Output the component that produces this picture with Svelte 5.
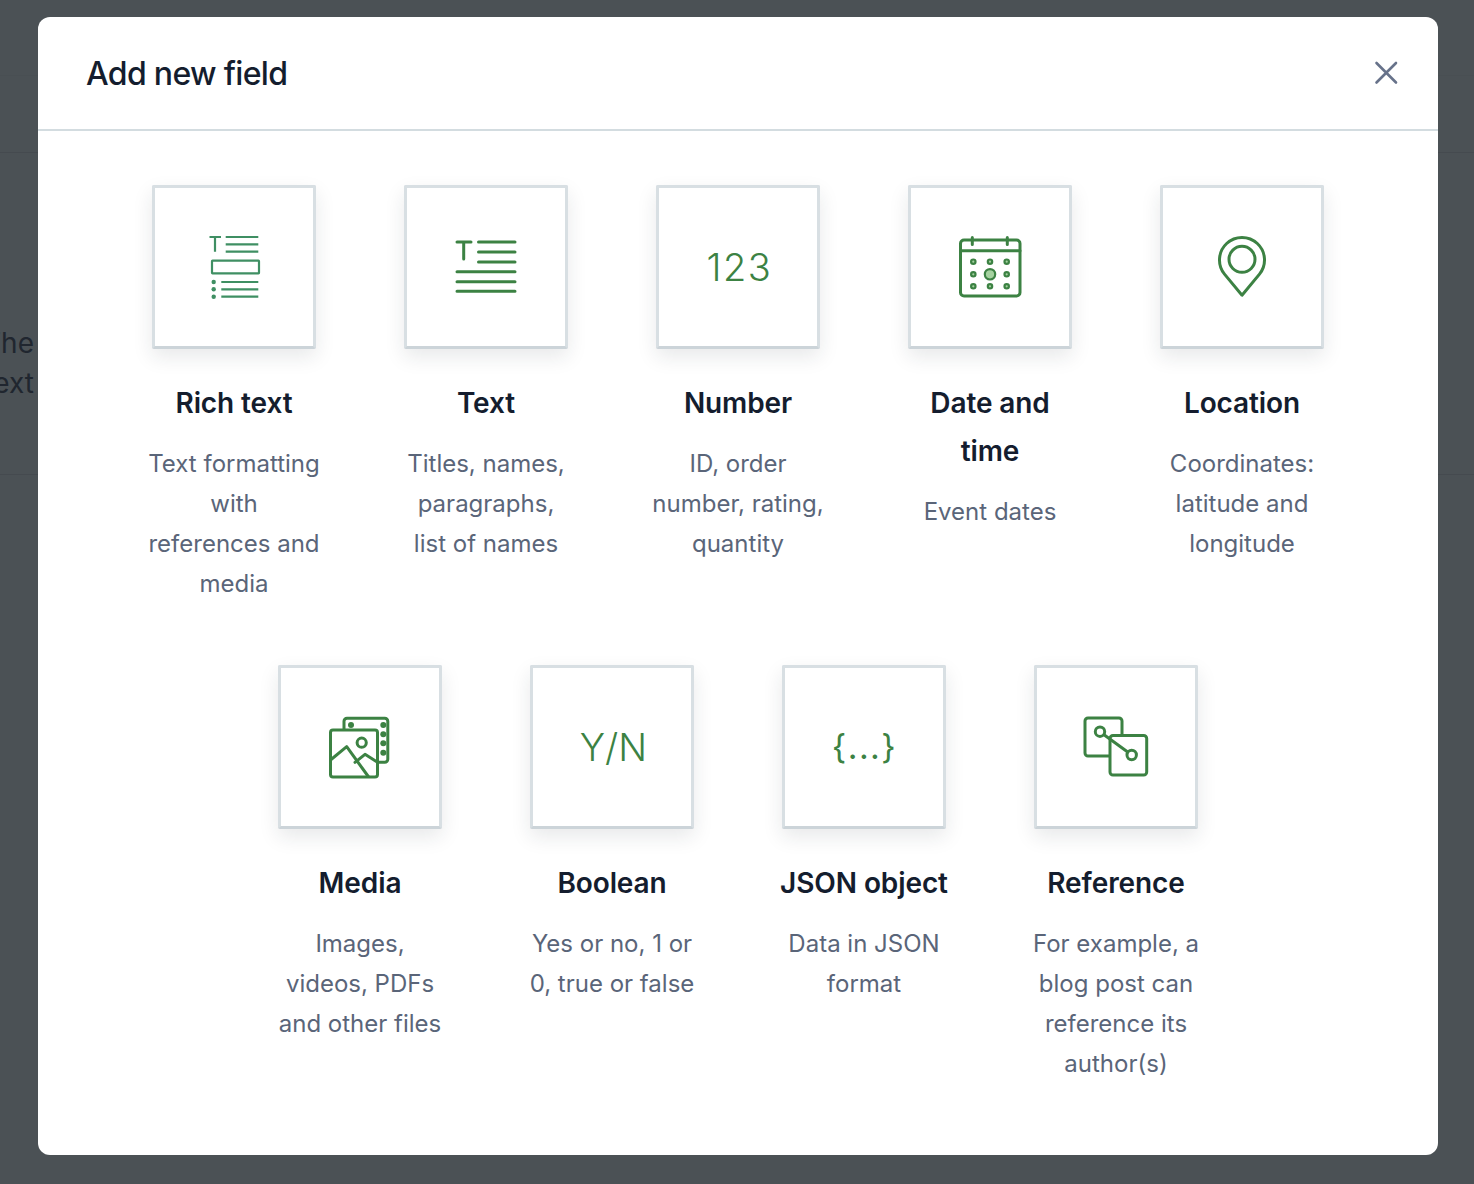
<script>
  const fields = [
    { id: 'rich', name: 'Rich text', desc: 'Text formatting with references and media' },
    { id: 'text', name: 'Text', desc: 'Titles, names, paragraphs, list of names' },
    { id: 'number', name: 'Number', desc: 'ID, order number, rating, quantity', glyph: '123' },
    { id: 'date', name: 'Date and time', desc: 'Event dates' },
    { id: 'location', name: 'Location', desc: 'Coordinates: latitude and longitude' },
    { id: 'media', name: 'Media', desc: 'Images, videos, PDFs and other files' },
    { id: 'boolean', name: 'Boolean', desc: 'Yes or no, 1 or 0, true or false', glyph: 'Y/N' },
    { id: 'json', name: 'JSON object', desc: 'Data in JSON format', glyph: '{...}' },
    { id: 'reference', name: 'Reference', desc: 'For example, a blog post can reference its author(s)' }
  ];

  const calX = [23.3, 40, 56.7];
  const calY = [34.7, 47.3, 59.3];
</script>

<div class="page">
  <div class="behind">
    <hr class="line one" />
    <hr class="line two" />
    <p class="peek">The<br />ext</p>
    <hr class="line three" />
  </div>

  <div class="modal">
    <header>
      <h1>Add new field</h1>
      <button class="close" aria-label="Close">
        <svg width="24" height="24" viewBox="0 0 24 24">
          <path d="M2.5 2 22 21.5M22 2 2.5 21.5" />
        </svg>
      </button>
    </header>

    <div class="grid">
      {#each fields as f}
        <div class="field">
          <div class="tile">
            {#if f.glyph}
              <span class="glyph {f.id}">{f.glyph}</span>
            {:else}
              <svg class="icon" width="80" height="80" viewBox="0 0 80 80">
                {#if f.id === 'rich'}
                  <g class="teal">
                    <path class="thin" d="M15.5 10H27M21 10v14.7M31.7 10h32.6M31.7 17.3h32.6M31.7 24.7h32.6M27.3 55h37M27.3 62.3h37M27.3 69.7h37" />
                    <rect class="thin" x="18" y="33.7" width="47" height="12.6" rx="0.5" />
                    <circle class="dot" cx="19.7" cy="55" r="2.2" />
                    <circle class="dot" cx="19.7" cy="62.3" r="2.2" />
                    <circle class="dot" cx="19.7" cy="69.7" r="2.2" />
                  </g>
                {:else if f.id === 'text'}
                  <path class="bold" d="M11 15h14M17.7 15v17M32.5 15H69M32.5 25H69M32.5 35H69M11 44.7h58M11 54.7h58M11 64.3h58" />
                {:else if f.id === 'date'}
                  <rect x="10.5" y="13" width="59.5" height="56" rx="3.5" />
                  <path d="M10.5 23.7H70M22.3 10.5V17.5M57.3 10.5V17.5" />
                  {#each calY as y}
                    {#each calX as x}
                      {#if !(x === 40 && y === 47.3)}
                        <circle class="seat" cx={x} cy={y} r="2.2" />
                      {/if}
                    {/each}
                  {/each}
                  <circle class="seat" cx="40" cy="47.3" r="5.2" />
                {:else if f.id === 'location'}
                  <path d="M40 68.2 22.5 47.1A22.5 22.5 0 1 1 57.5 47.1Z" />
                  <circle cx="40" cy="32.3" r="13" />
                {:else if f.id === 'media'}
                  <path d="M24 22v-7.8a3 3 0 0 1 3-3h37.8a3 3 0 0 1 3 3v38a3 3 0 0 1-3 3h-6.5" />
                  <rect x="10.5" y="23" width="47" height="47" rx="2.5" />
                  <path d="M10.5 53 26.7 39.7 48.3 69.5M35 55.3 45 47.3l12.5 8" />
                  <circle cx="41.7" cy="35.7" r="4.6" />
                  <circle class="dot" cx="31" cy="18" r="3" />
                  <circle class="dot" cx="63.3" cy="18" r="3" />
                  <circle class="dot" cx="63.3" cy="27.3" r="3" />
                  <circle class="dot" cx="63.3" cy="36.3" r="3" />
                  <circle class="dot" cx="63.3" cy="45.7" r="3" />
                {:else if f.id === 'reference'}
                  <path d="M46 28V14a3 3 0 0 0-3-3H12a3 3 0 0 0-3 3v32a3 3 0 0 0 3 3h21" />
                  <rect x="34" y="28.5" width="36.7" height="39.5" rx="3" />
                  <circle cx="24" cy="24.7" r="4.7" />
                  <circle cx="55.7" cy="48" r="4.7" />
                  <path d="M28 27.7 51.7 45" />
                {/if}
              </svg>
            {/if}
          </div>
          <h2>{f.name}</h2>
          <p>{f.desc}</p>
        </div>
      {/each}
    </div>
  </div>
</div>

<style>
  :global(body) {
    background: #4b5155;
  }

  .page {
    position: relative;
    height: 1184px;
    overflow: hidden;
    padding-top: 17px;
    box-sizing: border-box;
    font-family: Inter, "Liberation Sans", sans-serif;
  }

  .behind {
    position: absolute;
    inset: 0;
  }

  .line {
    position: absolute;
    left: 0;
    right: 0;
    margin: 0;
    border: 0;
    height: 1px;
    background: #454a4f;
  }

  .one { top: 75px; background: #494f53; }
  .two { top: 152px; }
  .three { top: 474px; }

  .behind .peek {
    position: absolute;
    left: -22px;
    top: 323px;
    width: 56px;
    margin: 0;
    text-align: right;
    font-size: 28px;
    line-height: 40px;
    color: #20262f;
  }

  .modal {
    position: relative;
    width: 1400px;
    height: 1138px;
    margin-left: 38px;
    background: #fff;
    border-radius: 12px;
  }

  header {
    height: 112px;
    display: flex;
    align-items: center;
    justify-content: space-between;
    padding: 0 40px 0 48px;
    border-bottom: 2px solid #d3dce0;
  }

  h1 {
    margin: 0;
    font-size: 32px;
    font-weight: 500;
    letter-spacing: -0.67px;
    color: #141d2e;
  }

  .close {
    display: flex;
    padding: 0;
    border: 0;
    background: none;
  }

  .close path {
    fill: none;
    stroke: #67728a;
    stroke-width: 2.6;
    stroke-linecap: round;
  }

  .grid {
    display: flex;
    flex-wrap: wrap;
    justify-content: center;
    gap: 61px 80px;
    padding-top: 54px;
  }

  .field {
    width: 172px;
    text-align: center;
  }

  .tile {
    width: 164px;
    height: 164px;
    margin: 0 auto;
    box-sizing: border-box;
    display: flex;
    align-items: center;
    justify-content: center;
    background: #fff;
    border: 3px solid #d8dfe3;
    border-bottom-color: #ccd4d9;
    border-radius: 2px;
    box-shadow: 0 8px 20px rgba(25, 37, 50, 0.1);
  }

  .icon {
    fill: none;
    stroke: #3c8243;
    stroke-width: 3;
    stroke-linecap: round;
    stroke-linejoin: round;
  }

  .teal { stroke: #3f8f63; }
  .thin { stroke-width: 2.2; stroke-linecap: butt; }
  .dot { fill: #3c8243; stroke: none; }
  .teal .dot { fill: #3f8f63; }
  .seat { fill: #a5d2a0; stroke-width: 2.2; }

  .glyph {
    font-size: 38px;
    font-weight: 300;
    color: #3c8243;
    line-height: 1;
  }

  .glyph.number {
    letter-spacing: 1.5px;
    padding-left: 3px;
  }

  .glyph.boolean {
    padding-left: 3px;
  }

  .glyph.json {
    font-size: 34px;
    font-weight: 400;
    letter-spacing: 1.4px;
    padding-left: 1px;
  }

  h2 {
    margin: 30px 0 17px;
    font-size: 28px;
    line-height: 48px;
    font-weight: 600;
    letter-spacing: -0.1px;
    color: #141d2e;
  }

  p {
    margin: 0;
    font-size: 24px;
    line-height: 40px;
    color: #5a6579;
  }
</style>
